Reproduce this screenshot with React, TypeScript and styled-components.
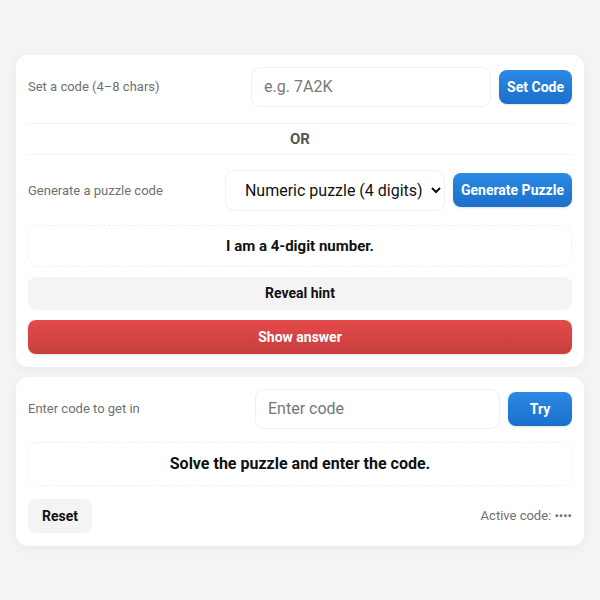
import React from "react";
import styled, { createGlobalStyle } from "styled-components";

const Global = createGlobalStyle`
  * { box-sizing: border-box; }
  html, body { margin: 0; padding: 0; background: #f4f4f4; }
  body { font-family: Roboto, "Noto Sans", "Liberation Sans", sans-serif; color: #111; }
`;

const Page = styled.main`
  min-height: 600px;
  padding: 0 16px;
  display: flex;
  flex-direction: column;
  justify-content: center;
  gap: 10px;
`;

const Card = styled.section<{ $gap: number }>`
  background: #fff;
  border-radius: 12px;
  box-shadow: 0 2px 10px rgba(0, 0, 0, 0.05);
  padding: 12px 12px 13px;
  display: flex;
  flex-direction: column;
  gap: ${(p) => p.$gap}px;
`;

const Row = styled.div`
  display: flex;
  align-items: center;
  gap: 8px;
`;

const Label = styled.label`
  flex: 1;
  font-size: 13px;
  color: #707070;
`;

const TextInput = styled.input<{ $w: number }>`
  width: ${(p) => p.$w}px;
  height: 40px;
  border: 1px solid #f0f0f0;
  border-radius: 9px;
  padding: 0 12px;
  font-family: inherit;
  font-size: 16px;
  color: #222;
  background: #fff;
  outline: none;
  &::placeholder { color: #777; }
`;

const Select = styled.select<{ $w: number }>`
  width: ${(p) => p.$w}px;
  height: 41px;
  border: 1px solid #f0f0f0;
  border-radius: 9px;
  padding: 0 2px 0 15px;
  font-family: inherit;
  font-size: 16px;
  color: #111;
  background: #fff;
  outline: none;
`;

const Button = styled.button<{ $tone?: "blue" | "red" | "gray"; $full?: boolean; $h?: number }>`
  height: ${(p) => p.$h ?? 34}px;
  min-width: 64px;
  padding: 0 8px;
  border: none;
  border-radius: 8px;
  font-family: inherit;
  font-size: 14px;
  font-weight: 700;
  cursor: pointer;
  white-space: nowrap;
  width: ${(p) => (p.$full ? "100%" : "auto")};
  color: ${(p) => (p.$tone === "gray" ? "#111" : "#fff")};
  background: ${(p) =>
    p.$tone === "red"
      ? "linear-gradient(#e54a4a, #c63e3e)"
      : p.$tone === "gray"
      ? "#f4f4f4"
      : "linear-gradient(#2b8ae4, #1b6fcb)"};
  box-shadow: ${(p) => (p.$tone === "gray" ? "none" : "0 1px 2px rgba(0,0,0,0.12)")};
`;

const Divider = styled.div`
  height: 32px;
  display: flex;
  align-items: center;
  justify-content: center;
  border-top: 1px solid #f3f3f3;
  border-bottom: 1px solid #f3f3f3;
  font-size: 15px;
  font-weight: 700;
  color: #555;
  margin: 6px 0 5px;
`;

const Message = styled.div<{ $size: number; $h: number; $mt?: number }>`
  height: ${(p) => p.$h}px;
  margin-top: ${(p) => p.$mt ?? 0}px;
  border: 1px dashed #efefef;
  border-radius: 10px;
  display: flex;
  align-items: center;
  justify-content: center;
  font-size: ${(p) => p.$size}px;
  font-weight: 700;
  color: #111;
`;

const Footer = styled.div`
  display: flex;
  align-items: center;
  justify-content: space-between;
`;

const Status = styled.span`
  font-size: 13px;
  color: #707070;
`;

export default function App() {
  return (
    <>
      <Global />
      <Page>
        <Card $gap={10}>
          <Row>
            <Label>Set a code (4–8 chars)</Label>
            <TextInput $w={240} placeholder="e.g. 7A2K" />
            <Button $tone="blue">Set Code</Button>
          </Row>
          <Divider>OR</Divider>
          <Row>
            <Label>Generate a puzzle code</Label>
            <Select $w={220} defaultValue="num4">
              <option value="num4">Numeric puzzle (4 digits)</option>
              <option value="alpha">Alphanumeric puzzle</option>
            </Select>
            <Button $tone="blue">Generate Puzzle</Button>
          </Row>
          <Message $size={15} $h={42} $mt={4}>I am a 4-digit number.</Message>
          <Button $tone="gray" $full $h={33}>Reveal hint</Button>
          <Button $tone="red" $full>Show answer</Button>
        </Card>
        <Card $gap={13}>
          <Row>
            <Label>Enter code to get in</Label>
            <TextInput $w={245} placeholder="Enter code" />
            <Button $tone="blue">Try</Button>
          </Row>
          <Message $size={16} $h={44}>Solve the puzzle and enter the code.</Message>
          <Footer>
            <Button $tone="gray">Reset</Button>
            <Status>Active code: ••••</Status>
          </Footer>
        </Card>
      </Page>
    </>
  );
}
